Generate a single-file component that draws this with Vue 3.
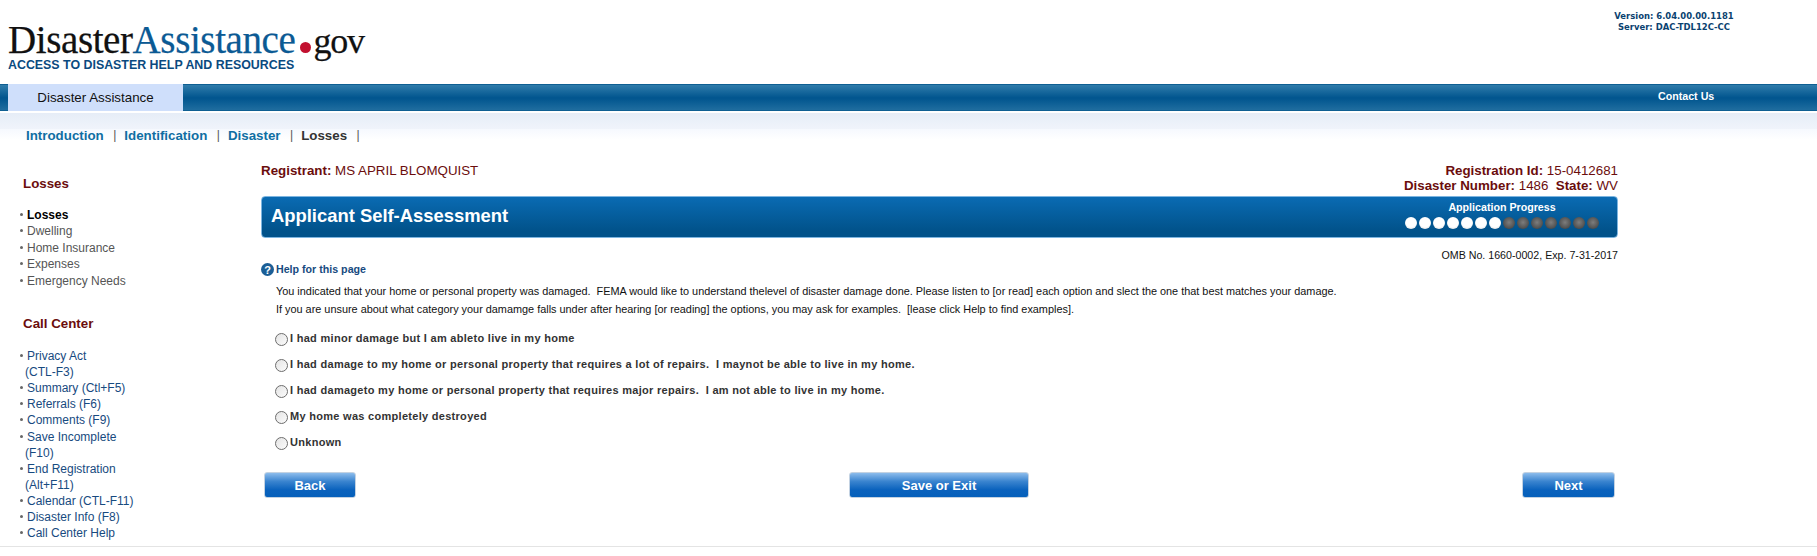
<script setup>
const stageLinks = [
  { label: 'Introduction', done: true },
  { label: 'Identification', done: true },
  { label: 'Disaster', done: true },
  { label: 'Losses', done: false }
]
const lossItems = ['Losses', 'Dwelling', 'Home Insurance', 'Expenses', 'Emergency Needs']
const callItems = [
  ['Privacy Act', '(CTL-F3)'], ['Summary (Ctl+F5)'], ['Referrals (F6)'], ['Comments (F9)'],
  ['Save Incomplete', '(F10)'], ['End Registration', '(Alt+F11)'], ['Calendar (CTL-F11)'],
  ['Disaster Info (F8)'], ['Call Center Help']
]
const introLines = [
  'You indicated that your home or personal property was damaged.  FEMA would like to understand thelevel of disaster damage done. Please listen to [or read] each option and slect the one that best matches your damage.',
  'If you are unsure about what category your damamge falls under after hearing [or reading] the options, you may ask for examples.  [lease click Help to find examples].'
]
const options = [
  'I had minor damage but I am ableto live in my home',
  'I had damage to my home or personal property that requires a lot of repairs.  I maynot be able to live in my home.',
  'I had damageto my home or personal property that requires major repairs.  I am not able to live in my home.',
  'My home was completely destroyed',
  'Unknown'
]
const dots = Array.from({ length: 14 }, (_, i) => i < 7)
</script>

<template>
  <div class="page">
    <header class="top">
      <div class="brand">
        <div class="logo"><span class="black">Disaster</span><span class="blue">Assistance</span><i class="reddot"></i><span class="black gov">gov</span></div>
        <div class="tagline">ACCESS TO DISASTER HELP AND RESOURCES</div>
      </div>
      <div class="version">Version: 6.04.00.00.1181<br>Server: DAC-TDL12C-CC</div>
    </header>

    <nav class="bar">
      <div class="tab">Disaster Assistance</div>
      <a class="contact">Contact Us</a>
    </nav>

    <div class="crumbs">
      <template v-for="s in stageLinks" :key="s.label">
        <span :class="s.done ? 'crumb done' : 'crumb'">{{ s.label }}</span><span class="sep">|</span>
      </template>
    </div>

    <div class="body">
      <aside class="side">
        <h3 class="side-head">Losses</h3>
        <ul class="side-list first">
          <li v-for="(l, i) in lossItems" :key="l" :class="i === 0 ? 'cur' : 'todo'"><span class="line">{{ l }}</span></li>
        </ul>
        <h3 class="side-head second">Call Center</h3>
        <ul class="side-list calls">
          <li v-for="c in callItems" :key="c[0]"><span v-for="t in c" :key="t" class="line">{{ t }}</span></li>
        </ul>
      </aside>

      <main class="main">
        <div class="reg">
          <div class="reg-left"><b>Registrant:</b> MS APRIL BLOMQUIST</div>
          <div class="reg-right">
            <div><b>Registration Id:</b> 15-0412681</div>
            <div><b>Disaster Number:</b> 1486 &nbsp;<b>State:</b> WV</div>
          </div>
        </div>

        <div class="banner">
          <h1>Applicant Self-Assessment</h1>
          <div class="progress">
            <div class="progress-label">Application Progress</div>
            <div class="dots"><i v-for="(d, i) in dots" :key="i" :class="d ? 'dot on' : 'dot'"></i></div>
          </div>
        </div>

        <div class="omb">OMB No. 1660-0002, Exp. 7-31-2017</div>

        <div class="help">
          <svg width="13" height="13" viewBox="0 0 13 13"><circle cx="6.5" cy="6.5" r="6.5" fill="#1b5e96"/><text x="6.5" y="10.6" text-anchor="middle" class="q">?</text></svg>
          <span>Help for this page</span>
        </div>

        <div class="intro">
          <p v-for="t in introLines" :key="t">{{ t }}</p>
        </div>

        <div class="opts">
          <label v-for="o in options" :key="o" class="opt"><input type="radio" name="dmg"><span>{{ o }}</span></label>
        </div>

        <div class="btns">
          <button class="btn back">Back</button>
          <button class="btn save">Save or Exit</button>
          <button class="btn next">Next</button>
        </div>
      </main>
    </div>
    <div class="foot"></div>
  </div>
</template>

<style>
html, body { margin: 0; background: #fff; }
</style>

<style scoped>
.page { width: 1817px; height: 556px; overflow: hidden; font-family: "Liberation Sans", Arial, sans-serif; color: #000; background: #fff; }
.top { height: 84px; display: flex; justify-content: space-between; align-items: flex-start; box-sizing: border-box; }
.brand { padding: 21px 0 0 8px; }
.logo { font-family: "Liberation Serif", "Times New Roman", serif; font-size: 39px; line-height: 37px; letter-spacing: -0.4px; white-space: nowrap; display: flex; align-items: baseline; -webkit-text-stroke: .25px; }
.black { color: #111; }
.blue { color: #0b5a94; }
.gov { font-size: 36px; letter-spacing: -1.2px; margin-left: -1px; }
.reddot { display: inline-block; width: 11px; height: 11px; border-radius: 50%; background: #c2102f; margin: 0 3px 0 5px; }
.tagline { font-size: 12.4px; font-weight: 700; line-height: 14px; color: #0a4a80; white-space: nowrap; margin-top: -2px; }
.version { width: 160px; margin: 11px 63px 0 0; font-family: "DejaVu Sans", Verdana, sans-serif; font-size: 8.45px; font-weight: 700; line-height: 11px; color: #0a4270; text-align: center; }
.bar { height: 27px; box-sizing: border-box; border-top: 1px solid #0f5f92; border-bottom: 1px solid #0f5f92; background: linear-gradient(#2f7cab 0%, #02568f 50%, #02568f 55%, #1f6d9f 100%); display: flex; justify-content: space-between; align-items: center; padding-left: 8px; }
.tab { width: 175px; height: 27px; margin-top: -1px; background: #cfdffb; color: #111; font-size: 13.33px; line-height: 27px; text-align: center; }
.contact { color: #fff; font-size: 10.67px; font-weight: 700; width: 56px; margin-right: 103px; white-space: nowrap; position: relative; top: -2px; }
.crumbs { margin-top: 2px; background: linear-gradient(#e6edf7 0%, #f0f4fb 60%, #f6f9fe 61%, #fff 100%); padding: 17px 0 0 26px; height: 10px; display: flex; align-items: center; font-size: 13.33px; font-weight: 700; white-space: nowrap; }
.crumb { color: #333; }
.crumb.done { color: #0f6ea3; }
.sep { font-weight: 400; color: #555; font-size: 12px; margin: 0 8px 0 9.5px; }
.body { display: flex; margin-top: 0; height: 406px; }
.side { width: 261px; flex: none; box-sizing: border-box; padding: 36px 0 0 20px; }
.side-head { margin: 0 0 0 3px; font-size: 13.33px; line-height: 16px; color: #6b0d0d; font-weight: 700; }
.side-head.second { margin-top: 27px; }
.side-list { list-style: none; margin: 15px 0 0; padding: 0; font-size: 12px; line-height: 16.4px; }
.side-list.calls { margin-top: 16px; color: #174a80; line-height: 16.1px; }
.side-list li { position: relative; padding-left: 5px; }
.line { display: block; white-space: nowrap; }
.line:first-child { padding-left: 2px; }
.side-list li::before { content: ""; position: absolute; left: 0; top: 6px; width: 3px; height: 3px; border-radius: 50%; background: #666; }
.side-list .cur { font-weight: 700; color: #000; }
.side-list .todo { color: #555; }
.main { width: 1357px; flex: none; }
.reg { display: flex; justify-content: space-between; align-items: flex-start; padding-top: 23px; color: #6b0d0d; font-size: 13.33px; line-height: 15px; height: 33px; }
.reg-right { text-align: right; }
.banner { height: 42px; box-sizing: border-box; border: 1px solid #7db5e0; border-radius: 4px; background: linear-gradient(#0a6bb3 0%, #01528a 85%, #01528a 100%); display: flex; justify-content: space-between; color: #fff; padding-left: 9px; }
.banner h1 { margin: 0; font-size: 18.4px; line-height: 38px; font-weight: 700; }
.progress { width: 196px; margin-right: 17px; text-align: center; }
.progress-label { font-size: 10.67px; font-weight: 700; line-height: 12px; margin-top: 4px; }
.dots { display: flex; gap: 2px; justify-content: center; margin-top: 4px; }
.dot { width: 12px; height: 12px; border-radius: 50%; background: radial-gradient(circle at 50% 45%, #7d7d7d 0%, #555 60%, #333 100%); }
.dot.on { background: radial-gradient(circle at 50% 40%, #fff 0%, #fff 55%, #cfcfcf 100%); }
.omb { text-align: right; font-size: 10.67px; line-height: 13px; color: #111; margin: 11px 0 0; }
.help { display: flex; align-items: center; gap: 2px; margin-top: 0; font-size: 10.67px; font-weight: 700; color: #174a80; line-height: 14px; }
.q { font: 700 11px "Liberation Sans", Arial, sans-serif; fill: #fff; }
.intro { padding-left: 15px; margin-top: 7px; font-size: 10.88px; line-height: 17.5px; color: #111; white-space: pre-wrap; }
.intro p { margin: 0; }
.opts { margin-top: 13px; padding-left: 14px; }
.opt { display: flex; align-items: flex-start; height: 26px; font-size: 11px; font-weight: 700; color: #333; line-height: 14px; white-space: pre-wrap; letter-spacing: .29px; }
.opt input { appearance: none; -webkit-appearance: none; width: 13px; height: 13px; box-sizing: border-box; margin: 2px 2px 0 0; border: 1px solid #6d6d6d; border-radius: 50%; background: linear-gradient(135deg, #e4e4e4, #fbfbfb); }
.btns { display: flex; justify-content: space-between; padding: 11px 3px 0 3px; }
.btn { height: 26px; border: 1px solid #c3d2e2; border-radius: 3px; color: #fff; font: 700 13px "Liberation Sans", Arial, sans-serif; padding: 0; background: linear-gradient(#8cbcec 0%, #3a84cf 35%, #0a62bd 70%, #0560bb 100%); }
.back { width: 92px; }
.save { width: 180px; }
.next { width: 93px; }
.foot { height: 1px; margin-top: 0; background: #e4e4e4; }
</style>
